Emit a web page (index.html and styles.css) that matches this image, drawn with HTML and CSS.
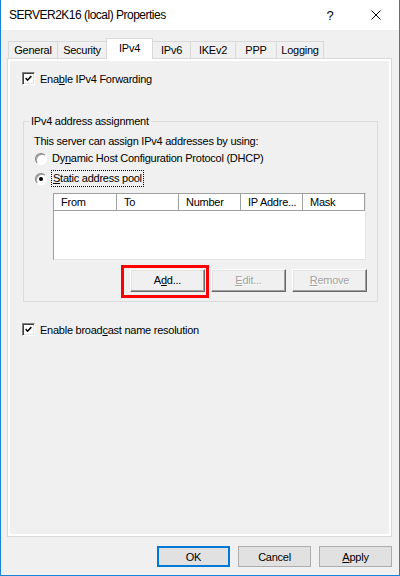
FILE: index.html
```html
<!DOCTYPE html>
<html lang="en">
<head>
<meta charset="utf-8">
<title>SERVER2K16 (local) Properties</title>
<link rel="stylesheet" href="styles.css">
</head>
<body>
<div class="window">
  <div class="titlebar">
    <div class="title">SERVER2K16 (local) Properties</div>
    <div class="caption-btn help">?</div>
    <div class="caption-btn close">
      <svg width="10" height="10" viewBox="0 0 10 10"><path d="M0.5 0.5 L9.5 9.5 M9.5 0.5 L0.5 9.5" stroke="#000" stroke-width="1" fill="none"/></svg>
    </div>
  </div>

  <div class="tabs">
    <div class="tab w-general">General</div>
    <div class="tab w-security">Security</div>
    <div class="tab active w-ipv4">IPv4</div>
    <div class="tab w-ipv6">IPv6</div>
    <div class="tab w-ikev2">IKEv2</div>
    <div class="tab w-ppp">PPP</div>
    <div class="tab w-logging">Logging</div>
  </div>

  <div class="panel">
    <div class="page">
      <div class="check-row">
        <span class="checkbox checked">
          <svg width="11" height="11" viewBox="0 0 11 11"><polyline points="2,5 4.3,7.6 9,2.6" fill="none" stroke="#000" stroke-width="1.8"/></svg>
        </span>
        <span class="check-label">Ena<u>b</u>le IPv4 Forwarding</span>
      </div>

      <fieldset class="group">
        <legend>IPv4 address assignment</legend>
        <div class="group-body">
          <div class="desc">This server can assign IPv4 addresses by using:</div>
          <div class="radio-row first">
            <span class="radio"></span>
            <span class="radio-label">Dy<u>n</u>amic Host Configuration Protocol (DHCP)</span>
          </div>
          <div class="radio-row">
            <span class="radio checked"><span class="dot"></span></span>
            <span class="radio-label focus"><u>S</u>tatic address pool</span>
          </div>

          <div class="listview">
            <div class="list-header">
              <div class="col">From</div>
              <div class="col">To</div>
              <div class="col">Number</div>
              <div class="col">IP Addre...</div>
              <div class="col">Mask</div>
            </div>
          </div>

          <div class="pool-buttons">
            <div class="highlight-wrap">
              <button class="btn3d">A<u>d</u>d...</button>
              <span class="highlight"></span>
            </div>
            <button class="btn3d" disabled><u>E</u>dit...</button>
            <button class="btn3d" disabled><u>R</u>emove</button>
          </div>
        </div>
      </fieldset>

      <div class="check-row second">
        <span class="checkbox checked">
          <svg width="11" height="11" viewBox="0 0 11 11"><polyline points="2,5 4.3,7.6 9,2.6" fill="none" stroke="#000" stroke-width="1.8"/></svg>
        </span>
        <span class="check-label">Enable broad<u>c</u>ast name resolution</span>
      </div>
    </div>
  </div>

  <div class="dialog-buttons">
    <button class="btn default">OK</button>
    <button class="btn">Cancel</button>
    <button class="btn"><u>A</u>pply</button>
  </div>
</div>
</body>
</html>
```

FILE: styles.css
```css
html, body {
  margin: 0;
  padding: 0;
  background: #f0f0f0;
}

.window {
  width: 400px;
  height: 576px;
  box-sizing: border-box;
  border: 1px solid #1883d7;
  border-top: none;
  background: #f0f0f0;
  display: flex;
  flex-direction: column;
  font-family: "Liberation Sans", Arial, sans-serif;
  font-size: 11px;
  line-height: 13px;
  letter-spacing: -0.25px;
  color: #000;
}

u {
  text-decoration: underline;
  text-underline-offset: 1px;
}

/* Title bar */
.titlebar {
  height: 30px;
  flex: none;
  background: #fff;
  display: flex;
}

.title {
  flex: 1;
  display: flex;
  align-items: center;
  padding-left: 8px;
  font-size: 12px;
  letter-spacing: -0.5px;
}

.caption-btn {
  width: 46px;
  display: flex;
  align-items: center;
  justify-content: center;
}

.help {
  font-size: 13px;
  letter-spacing: 0;
}

/* Tab strip */
.tabs {
  flex: none;
  height: 20px;
  margin-top: 8px;
  margin-left: 7px;
  display: flex;
  align-items: flex-end;
  position: relative;
  z-index: 1;
}

.tab {
  height: 17px;
  box-sizing: border-box;
  border: 1px solid #d9d9d9;
  border-bottom: none;
  background: #f0f0f0;
  display: flex;
  align-items: center;
  justify-content: center;
  margin-left: -1px;
  padding-top: 1px;
}

.tab:first-child {
  margin-left: 0;
}

.tab.active {
  height: 21px;
  margin-bottom: -1px;
  background: #fff;
  padding-top: 0;
  padding-bottom: 2px;
  position: relative;
  z-index: 2;
}

.w-general { width: 50px; }
.w-security { width: 50px; }
.w-ipv4 { width: 47px; }
.w-ipv6 { width: 39px; }
.w-ikev2 { width: 46px; }
.w-ppp { width: 42px; }
.w-logging { width: 48px; }

/* Tab page */
.panel {
  flex: none;
  margin-left: 6px;
  width: 385px;
  height: 479px;
  box-sizing: border-box;
  border: 1px solid #d9d9d9;
  background: #fff;
  padding: 2px;
}

.page {
  height: 100%;
  box-sizing: border-box;
  background: #f0f0f0;
  padding: 11px 0 0 12px;
}

.check-row {
  display: flex;
  align-items: center;
  gap: 5px;
  height: 13px;
}

.check-label {
  padding-top: 1px;
}

.check-row.second {
  margin-top: 21px;
}

.checkbox {
  width: 13px;
  height: 13px;
  box-sizing: border-box;
  background: #fff;
  border: 1px solid;
  border-color: #808080 #ffffff #ffffff #808080;
  box-shadow: inset 1px 1px 0 #404040, inset -1px -1px 0 #e3e3e3;
  display: flex;
  align-items: center;
  justify-content: center;
  flex: none;
}

.checkbox svg {
  display: block;
  width: 9px;
  height: 9px;
}

/* Group box */
.group {
  margin: 30px 0 0 1px;
  padding: 0 0 9px 0;
  width: 355px;
  box-sizing: border-box;
  border: 1px solid #dcdcdc;
  min-width: 0;
}

.group legend {
  margin-left: 5px;
  padding: 0 2px;
  line-height: 13px;
}

.group-body {
  padding-left: 10px;
}

.desc {
  margin-top: 7px;
  height: 13px;
}

.radio-row {
  display: flex;
  align-items: center;
  gap: 5px;
  margin-top: 5px;
  min-height: 13px;
}

.radio-row.first {
  margin-top: 4px;
}

.radio {
  width: 12px;
  height: 12px;
  box-sizing: border-box;
  margin-left: 1px;
  border-radius: 50%;
  background: #fff;
  border: 1px solid;
  border-color: #808080 #ffffff #ffffff #808080;
  box-shadow: inset 1px 1px 0 #a0a0a0;
  display: flex;
  align-items: center;
  justify-content: center;
  flex: none;
}

.radio .dot {
  width: 4px;
  height: 4px;
  border-radius: 50%;
  background: #000;
}

.radio-label.focus {
  border: 1px dotted #000;
  padding: 1px 1px;
  margin-left: -1px;
}

/* List view */
.listview {
  margin: 6px 0 0 19px;
  width: 313px;
  height: 67px;
  box-sizing: border-box;
  background: #fff;
  border: 1px solid;
  border-color: #a0a0a0 #e3e3e3 #e3e3e3 #a0a0a0;
}

.list-header {
  display: flex;
  height: 17px;
}

.list-header .col {
  width: 62px;
  box-sizing: border-box;
  padding-left: 7px;
  border-right: 1px solid #a0a0a0;
  border-bottom: 1px solid #a0a0a0;
  box-shadow: inset 1px 0 0 #ffffff;
  display: flex;
  align-items: center;
  background: #fff;
}

.list-header .col:first-child {
  width: 63px;
}

/* Classic 3D buttons */
.pool-buttons {
  display: flex;
  gap: 6px;
  margin: 9px 0 0 96px;
}

.highlight-wrap {
  position: relative;
  display: flex;
}

.highlight {
  position: absolute;
  left: -9px;
  top: -4px;
  width: 88px;
  height: 33px;
  box-sizing: border-box;
  border: 3px solid #ff0000;
  pointer-events: none;
}

.btn3d {
  width: 75px;
  height: 23px;
  box-sizing: border-box;
  margin: 0;
  padding: 0;
  font: inherit;
  letter-spacing: inherit;
  color: #000;
  background: #f0f0f0;
  border: 1px solid;
  border-color: #ffffff #696969 #696969 #ffffff;
  box-shadow: inset -1px -1px 0 #a0a0a0, inset 1px 1px 0 #e3e3e3;
}

.btn3d:disabled {
  color: #a0a0a0;
  text-shadow: 1px 1px 0 #ffffff;
}

/* Dialog buttons */
.dialog-buttons {
  display: flex;
  justify-content: flex-end;
  gap: 8px;
  margin-top: 9px;
  padding-right: 7px;
}

.btn {
  width: 73px;
  height: 21px;
  box-sizing: border-box;
  margin: 0;
  padding: 1px 0 0;
  font: inherit;
  letter-spacing: inherit;
  color: #000;
  background: #e1e1e1;
  border: 1px solid #adadad;
}

.btn.default {
  border: 2px solid #0078d7;
}
```
